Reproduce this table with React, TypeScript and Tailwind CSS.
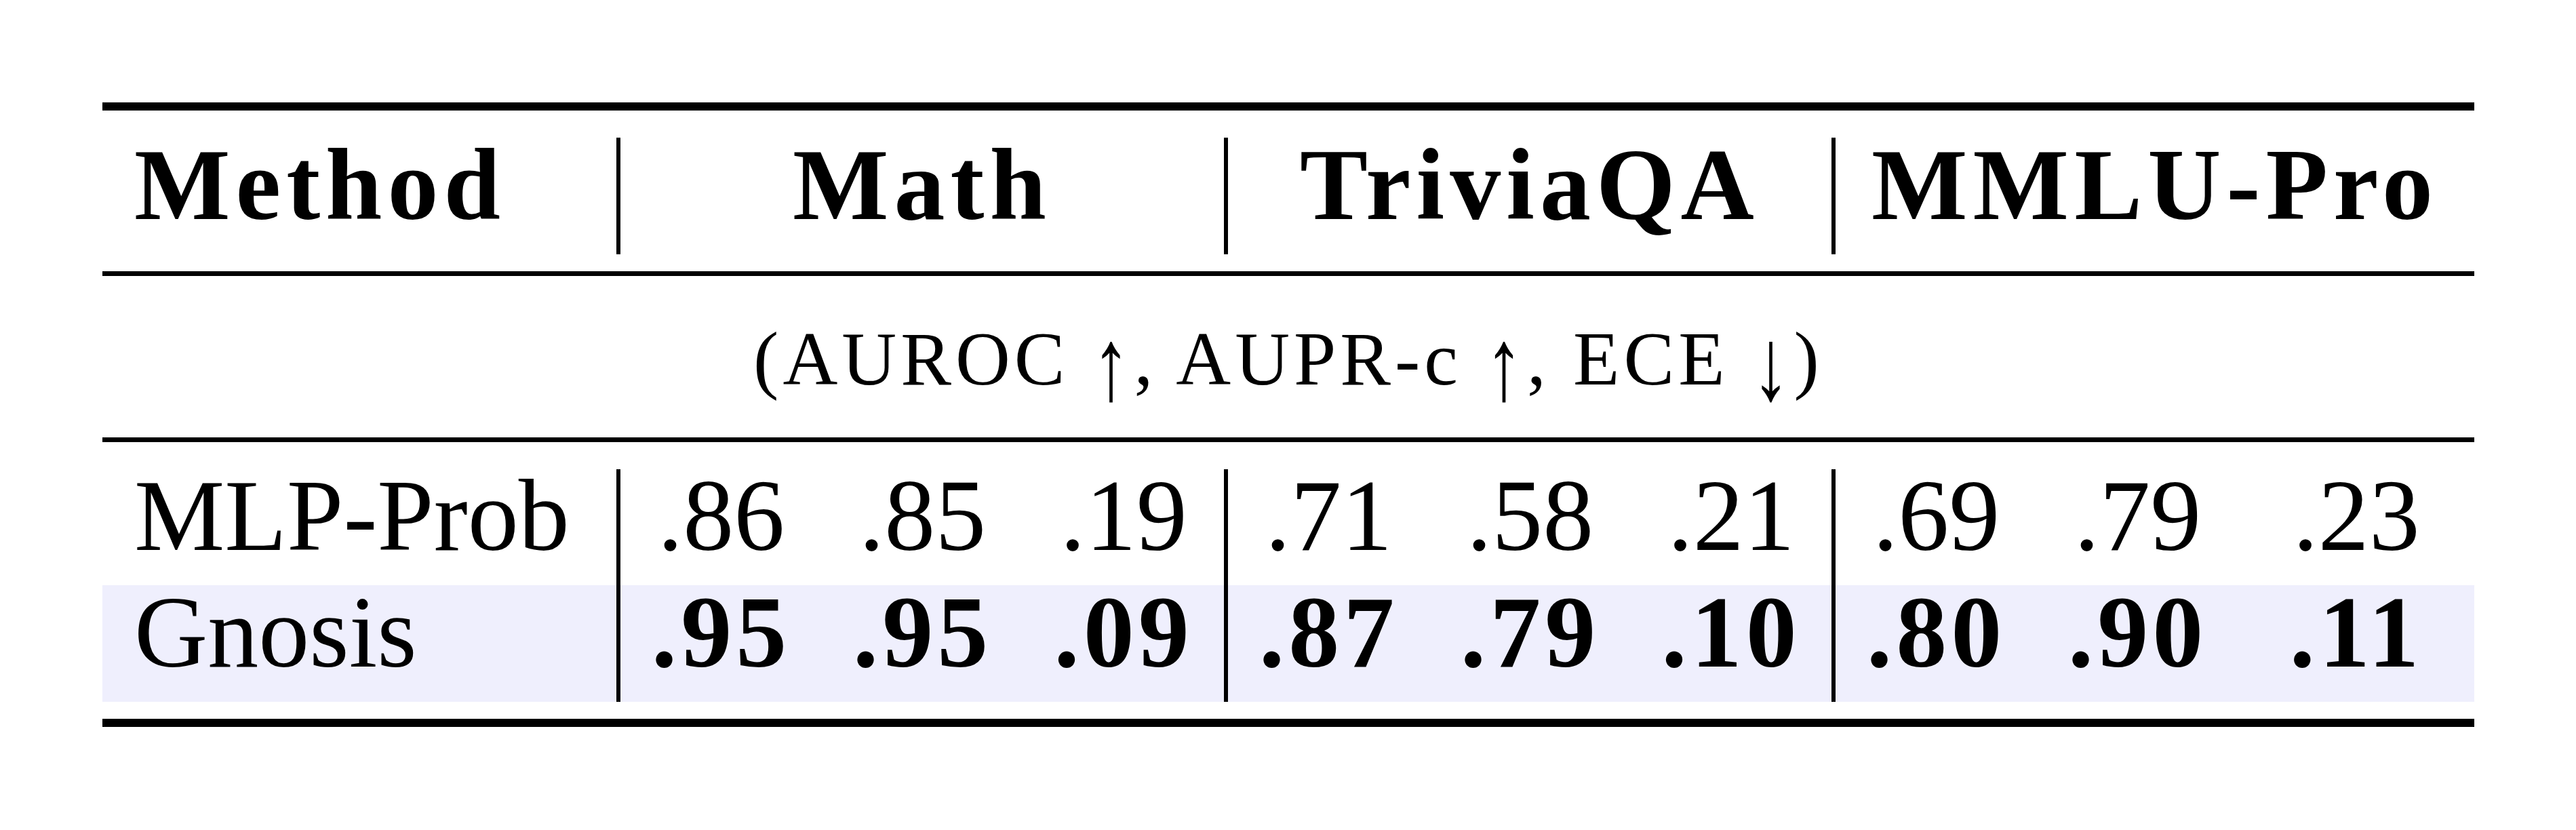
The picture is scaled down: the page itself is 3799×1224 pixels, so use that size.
import React from 'react';

type Group = {
  name: string;
  widths: string[];
  mlp: string[];
  gnosis: string[];
};

const groups: Group[] = [
  { name: 'Math', widths: ['w-[297px]', 'w-[297px]', 'w-[296px]'], mlp: ['.86', '.85', '.19'], gnosis: ['.95', '.95', '.09'] },
  { name: 'TriviaQA', widths: ['w-[297px]', 'w-[297px]', 'w-[296px]'], mlp: ['.71', '.58', '.21'], gnosis: ['.87', '.79', '.10'] },
  { name: 'MMLU-Pro', widths: ['w-[297px]', 'w-[297px]', 'w-[348px]'], mlp: ['.69', '.79', '.23'], gnosis: ['.80', '.90', '.11'] },
];

const groupWidth = ['w-[896px]', 'w-[896px]', 'w-[948px]'];

const Arrow = ({ ch }: { ch: string }) => (
  <span className="inline-block scale-y-[1.35] translate-y-[9px]">{ch}</span>
);

const Row = ({ label, values, bold, highlight, height }: { label: string; values: string[][]; bold?: boolean; highlight?: boolean; height: string }) => (
  <div className={`flex ${height} ${highlight ? 'bg-[#efeffd]' : ''}`}>
    <div className="w-[758px] flex items-end pl-[47px] pb-[28px] text-[150px] leading-[150px]">{label}</div>
    {groups.map((g, gi) => (
      <div key={g.name} className={`${groupWidth[gi]} flex border-l-[6px] border-black`}>
        {values[gi].map((v, i) => (
          <div
            key={i}
            className={`${g.widths[i]} flex items-end justify-center pb-[28px] text-[150px] leading-[150px] ${bold ? 'font-bold tracking-[6px]' : ''}`}
          >
            {v}
          </div>
        ))}
      </div>
    ))}
  </div>
);

export default function App() {
  return (
    <div className="min-h-screen bg-white pt-[151px] pl-[151px] font-['Liberation_Serif',serif] text-black">
      <div className="w-[3498px]">
        <div className="h-[12px] bg-black" />

        {/* header */}
        <div className="pt-[40px] pb-[25px]">
          <div className="flex h-[172px] font-bold text-[150px] leading-[150px] tracking-[8px]">
            <div className="w-[758px] flex items-end pl-[47px] pb-[28px]">Method</div>
            {groups.map((g, gi) => (
              <div key={g.name} className={`${groupWidth[gi]} flex items-end justify-center pb-[28px] border-l-[6px] border-black`}>
                {g.name}
              </div>
            ))}
          </div>
        </div>
        <div className="h-[7px] bg-black" />

        <div className="h-[238px] flex items-end justify-center pb-[60px] text-[112px] leading-[112px] tracking-[6px]">
          <span>
            (AUROC <Arrow ch="↑" />, AUPR-c <Arrow ch="↑" />, ECE <Arrow ch="↓" />)
          </span>
        </div>
        <div className="h-[7px] bg-black" />

        {/* rows */}
        <div className="pt-[40px] pb-[25px]">
          <Row label="MLP-Prob" values={groups.map((g) => g.mlp)} height="h-[171px]" />
          <Row label="Gnosis" values={groups.map((g) => g.gnosis)} bold highlight height="h-[172px]" />
        </div>
        <div className="h-[12px] bg-black" />
      </div>
    </div>
  );
}
